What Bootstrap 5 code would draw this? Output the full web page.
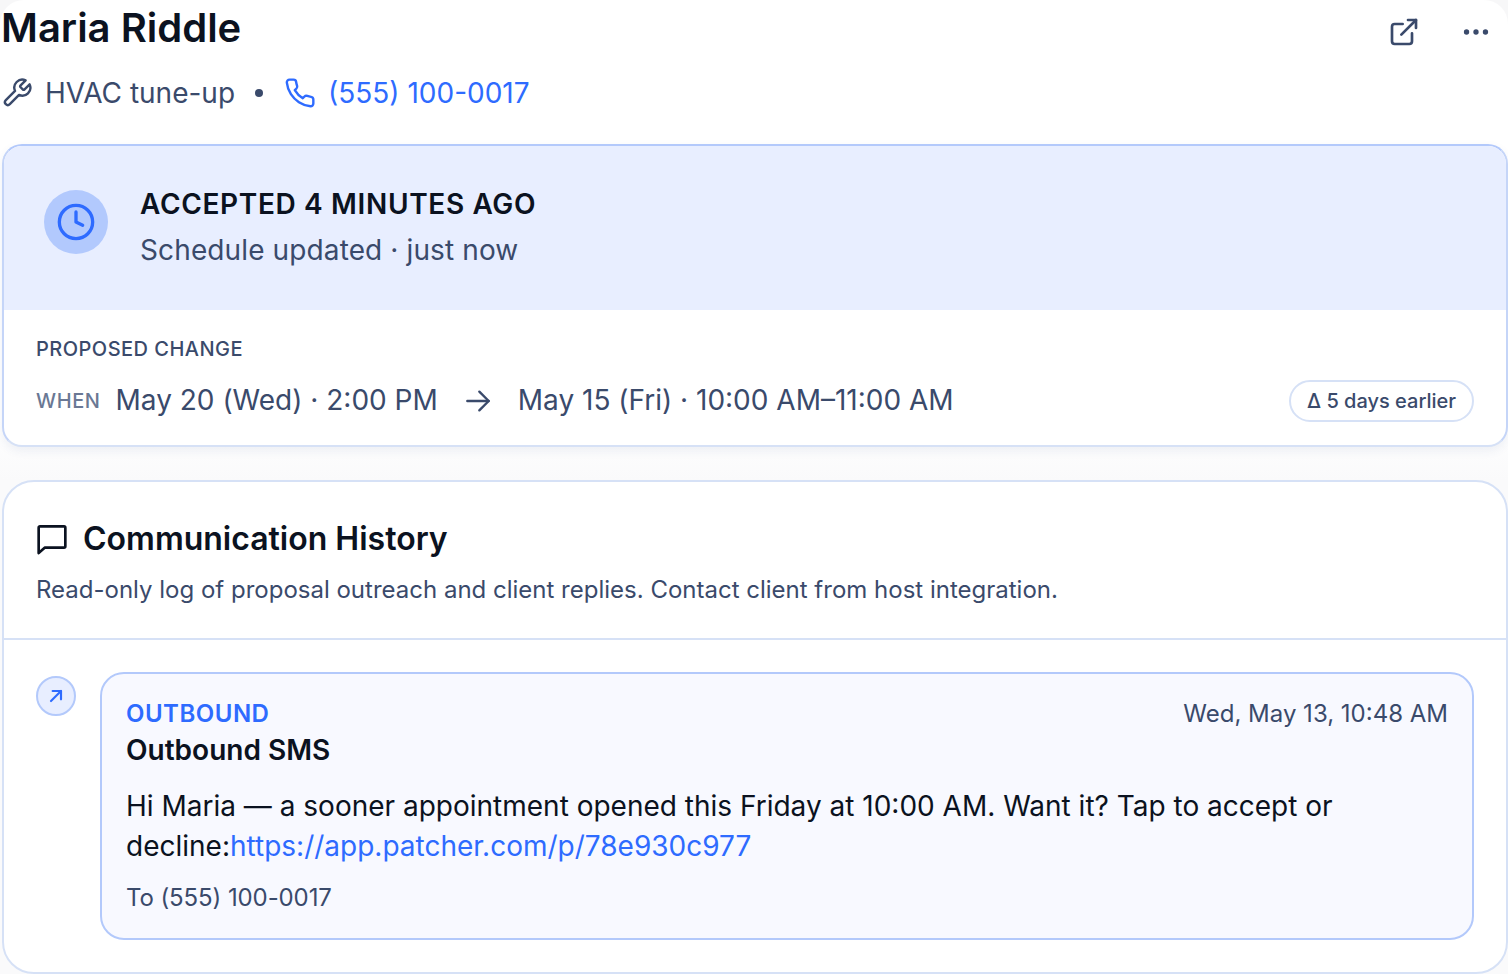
<!DOCTYPE html>
<html lang="en">
<head>
  <meta charset="UTF-8">
  <title>Maria Riddle</title>
  <link href="https://cdn.jsdelivr.net/npm/bootstrap@5.3.0/dist/css/bootstrap.min.css" rel="stylesheet">
  <style>
    html, body { height: 974px; overflow: hidden; }
    body { background: #f7f7f8; font-family: Inter, "Liberation Sans", sans-serif; color: #0b1220; }
    .sheet { height: 974px; background: linear-gradient(#fff 420px, #fafafb 480px); border-radius: 24px 24px 0 0; padding-left: 1px; }
    .title-row { height: 56px; }
    h1.name { font-size: 40px; font-weight: 600; line-height: 56px; margin: 0; color: #0b1220; }
    .slate { color: #3a4a6b; }
    .blue { color: #2e6bff; }
    .meta { height: 40px; margin-top: 17px; font-size: 28px; line-height: 40px; }
    .meta-ico { margin-right: 12px; }
    .sep { width: 8px; height: 8px; border-radius: 50%; background: #3a4a6b; margin: 0 21px 0 20px; }
    .status-card { margin: 31px 0 0 1px; height: 303px; background: #fff; border: 2px solid #c5d5f8; border-top-color: #b3c9fb; border-bottom-color: #d6e1f6; border-radius: 20px; overflow: hidden; box-shadow: 0 4px 10px rgba(50,80,140,.08); }
    .banner { height: 164px; background: #e8eeff; padding-left: 40px; }
    .clock { width: 64px; height: 64px; background: #b2c9fd; margin: 44px 32px 0 0; }
    .banner-text { padding-bottom: 2px; }
    .accepted { font-size: 28px; font-weight: 600; line-height: 44px; letter-spacing: .65px; }
    .updated { font-size: 28px; line-height: 44px; margin-top: 2px; letter-spacing: .12px; }
    .change { padding: 24px 32px 0 32px; }
    .change-label { font-size: 20px; line-height: 30px; font-weight: 500; letter-spacing: .47px; }
    .when { font-size: 20px; font-weight: 500; color: #6a7894; letter-spacing: .6px; margin-right: 15px; }
    .dates { font-size: 28px; line-height: 42px; margin-bottom: 2px; }
    .change-row { margin-top: 15px; }
    .arrow { margin: 0 24px; }
    .delta { font-size: 20px; font-weight: 500; height: 42px; line-height: 38px; padding: 0 16px; border: 2px solid #d6e1f6; border-radius: 21px; }
    .history-card { margin: 33px 0 0 1px; height: 494px; background: #fff; border: 2px solid #d6e1f6; border-radius: 32px; }
    .history-head { height: 158px; padding: 32px 32px 0 32px; border-bottom: 2px solid #d6e1f6; }
    h2.history-title { font-size: 32px; font-weight: 600; line-height: 50px; margin: 0; }
    .chat-ico { margin-right: 15px; }
    .history-sub { font-size: 24px; line-height: 38px; margin-top: 7px; }
    .history-body { padding: 32px 32px 0 32px; }
    .dot { width: 40px; height: 40px; background: #e8eeff; border: 2px solid #b3c9fb; margin: 4px 24px 0 0; }
    .bubble { height: 268px; background: #f8f9ff; border: 2px solid #b3c9fb; border-radius: 24px; padding: 21px 24px 0 24px; }
    .dir { font-size: 24px; font-weight: 600; line-height: 38px; letter-spacing: .5px; }
    .stamp { font-size: 24px; line-height: 38px; }
    .sms-title { font-size: 28px; font-weight: 600; line-height: 38px; margin-top: -2px; }
    .sms-text { font-size: 28px; line-height: 40px; margin: 17px 0 0 0; }
    .sms-text a { text-decoration: none; }
    .sms-to { font-size: 24px; line-height: 38px; margin-top: 13px; letter-spacing: -.1px; }
  </style>
</head>
<body>
<div class="sheet">

  <!-- Header -->
  <div class="title-row d-flex justify-content-between align-items-center">
    <h1 class="name">Maria Riddle</h1>
    <div class="d-flex align-items-center mt-2">
      <svg class="slate" width="32" height="32" viewBox="0 0 24 24" fill="none" stroke="currentColor" stroke-width="2" stroke-linecap="round" stroke-linejoin="round"><path d="M18 13v6a2 2 0 0 1-2 2H5a2 2 0 0 1-2-2V8a2 2 0 0 1 2-2h6"/><path d="M15 3h6v6"/><path d="M10 14 21 3"/></svg>
      <svg class="slate" style="margin:0 16px 0 40px" width="32" height="32" viewBox="0 0 24 24" fill="currentColor"><circle cx="4.9" cy="12" r="2"/><circle cx="12" cy="12" r="2"/><circle cx="19.1" cy="12" r="2"/></svg>
    </div>
  </div>
  <div class="meta d-flex align-items-center">
    <svg class="slate meta-ico" width="32" height="32" viewBox="0 0 24 24" fill="none" stroke="currentColor" stroke-width="1.8" stroke-linecap="round" stroke-linejoin="round"><path d="M14.7 6.3a1 1 0 0 0 0 1.4l1.6 1.6a1 1 0 0 0 1.4 0l3.77-3.77a6 6 0 0 1-7.94 7.94l-6.91 6.91a2.12 2.12 0 0 1-3-3l6.91-6.91a6 6 0 0 1 7.94-7.94l-3.76 3.76z"/></svg>
    <span class="slate">HVAC tune-up</span>
    <span class="sep"></span>
    <svg class="blue meta-ico" width="32" height="32" viewBox="0 0 24 24" fill="none" stroke="currentColor" stroke-width="1.8" stroke-linecap="round" stroke-linejoin="round"><path d="M22 16.92v3a2 2 0 0 1-2.18 2 19.8 19.8 0 0 1-8.63-3.07 19.5 19.5 0 0 1-6-6 19.8 19.8 0 0 1-3.07-8.67A2 2 0 0 1 4.11 2h3a2 2 0 0 1 2 1.72c.13.96.36 1.9.7 2.81a2 2 0 0 1-.45 2.11L8.09 9.91a16 16 0 0 0 6 6l1.27-1.27a2 2 0 0 1 2.11-.45c.91.34 1.85.57 2.81.7A2 2 0 0 1 22 16.92z"/></svg>
    <span class="blue">(555) 100-0017</span>
  </div>

  <!-- Status card -->
  <div class="status-card">
    <div class="banner d-flex align-items-center">
      <div class="clock rounded-circle d-flex align-items-center justify-content-center flex-shrink-0 align-self-start">
        <svg class="blue" width="40" height="40" viewBox="0 0 24 24" fill="none" stroke="currentColor" stroke-width="2" stroke-linecap="round" stroke-linejoin="round"><circle cx="12" cy="12" r="10"/><path d="M12 6v6l4 2"/></svg>
      </div>
      <div class="banner-text">
        <div class="accepted">ACCEPTED 4 MINUTES AGO</div>
        <div class="updated slate">Schedule updated · just now</div>
      </div>
    </div>
    <div class="change">
      <div class="change-label slate">PROPOSED CHANGE</div>
      <div class="change-row d-flex align-items-center">
        <span class="when">WHEN</span>
        <span class="dates slate">May 20 (Wed) · 2:00 PM</span>
        <svg class="slate arrow" width="32" height="32" viewBox="0 0 24 24" fill="none" stroke="currentColor" stroke-width="1.8" stroke-linecap="round" stroke-linejoin="round"><path d="M4 12h16"/><path d="m13 5 7 7-7 7"/></svg>
        <span class="dates slate">May 15 (Fri) · 10:00 AM–11:00 AM</span>
        <span class="delta slate ms-auto">Δ 5 days earlier</span>
      </div>
    </div>
  </div>

  <!-- History -->
  <div class="history-card">
    <div class="history-head">
      <div class="d-flex align-items-center">
        <svg class="chat-ico" width="32" height="32" viewBox="0 0 24 24" fill="none" stroke="#0b1220" stroke-width="2" stroke-linecap="round" stroke-linejoin="round"><path d="M2 3.5a1 1 0 0 1 1-1h18a1 1 0 0 1 1 1v14a1 1 0 0 1-1 1H6.5L2 22.5z"/></svg>
        <h2 class="history-title">Communication History</h2>
      </div>
      <div class="history-sub slate">Read-only log of proposal outreach and client replies. Contact client from host integration.</div>
    </div>
    <div class="history-body d-flex align-items-start">
      <div class="dot rounded-circle d-flex align-items-center justify-content-center flex-shrink-0">
        <svg class="blue" width="20" height="20" viewBox="0 0 24 24" fill="none" stroke="currentColor" stroke-width="2.6" stroke-linecap="round" stroke-linejoin="round"><path d="M6 18 18 6"/><path d="M8 6h10v10"/></svg>
      </div>
      <div class="bubble flex-grow-1">
        <div class="d-flex justify-content-between">
          <span class="dir blue">OUTBOUND</span>
          <span class="stamp slate">Wed, May 13, 10:48 AM</span>
        </div>
        <div class="sms-title">Outbound SMS</div>
        <p class="sms-text">Hi Maria — a sooner appointment opened this Friday at 10:00 AM. Want it? Tap to accept or decline:<a class="blue" href="#">https://app.patcher.com/p/78e930c977</a></p>
        <div class="sms-to slate">To (555) 100-0017</div>
      </div>
    </div>
  </div>

</div>
<script src="https://cdn.jsdelivr.net/npm/bootstrap@5.3.0/dist/js/bootstrap.bundle.min.js"></script>
</body>
</html>
